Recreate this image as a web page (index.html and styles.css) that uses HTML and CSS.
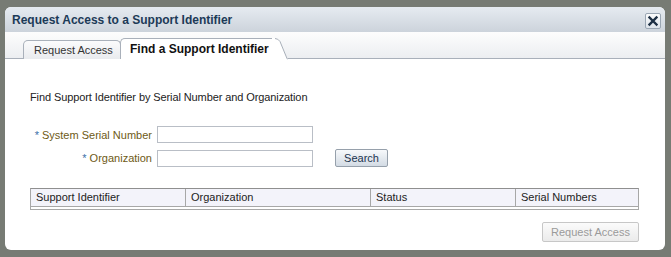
FILE: index.html
```html
<!DOCTYPE html>
<html>
<head>
<meta charset="utf-8">
<link rel="stylesheet" href="styles.css">
</head>
<body>
<div class="dialog">
  <div class="header">
    <span class="title">Request Access to a Support Identifier</span>
    <span class="close"><svg width="12" height="12" viewBox="0 0 12 12"><path d="M2.5 2.5 L9.5 9.5 M9.5 2.5 L2.5 9.5" stroke="#1d2f44" stroke-width="2.4" stroke-linecap="square"/></svg></span>
  </div>
  <div class="tabbar">
    <div class="tab">Request Access</div>
    <div class="tab active">Find a Support Identifier<svg class="slope" width="16" height="22" viewBox="0 0 16 22"><path d="M0 0 L3 0 Q6 0 8 3 L15 20 L16 21 L16 22 L0 22 Z" fill="#fff"/><path d="M3 0.5 Q6 0.5 8 3.5 L15 20.5 L16 21.5" fill="none" stroke="#a7aeb8"/></svg></div>
  </div>
  <div class="content">
    <p class="intro">Find Support Identifier by Serial Number and Organization</p>
    <div class="form">
      <label class="lbl"><span class="req">*</span> System Serial Number</label>
      <span class="input"></span>
      <span></span>
      <label class="lbl"><span class="req">*</span> Organization</label>
      <span class="input"></span>
      <button class="btn">Search</button>
    </div>
    <div class="table">
      <div class="thead">
        <div class="th c1">Support Identifier</div>
        <div class="th c2">Organization</div>
        <div class="th c3">Status</div>
        <div class="th c4">Serial Numbers</div>
      </div>
    </div>
    <div class="footer">
      <button class="btn disabled">Request Access</button>
    </div>
  </div>
</div>
</body>
</html>
```
FILE: styles.css
```css
html, body { margin: 0; padding: 0; }
body {
  background: #777b74;
  width: 671px;
  height: 257px;
  overflow: hidden;
  font-family: "Liberation Sans", Arial, sans-serif;
  font-size: 11px;
  color: #222;
}
.dialog {
  margin: 7px 6px 0 5px;
  height: 243px;
  background: #fff;
  border-radius: 6px;
  display: flex;
  flex-direction: column;
  overflow: hidden;
}
.header {
  height: 25px;
  background: linear-gradient(#e6ebf1, #ccd3db);
  display: flex;
  align-items: center;
  justify-content: space-between;
  padding: 0 4px 0 7px;
}
.title {
  font-weight: bold;
  font-size: 12px;
  color: #1c3a57;
}
.close {
  width: 14px;
  height: 14px;
  border: 1px solid #9aa6b3;
  border-radius: 2px;
  background: linear-gradient(#fafbfc, #dde3ea);
  display: flex;
  align-items: center;
  justify-content: center;
  margin-top: 2px;
}
.tabbar {
  height: 26px;
  background: linear-gradient(#fdfdfd, #eceef1);
  border-bottom: 1px solid #a9b0ba;
  display: flex;
  align-items: flex-end;
  padding-left: 18px;
}
.tab {
  height: 18px;
  width: 76px;
  padding: 0 10px;
  border: 1px solid #a9b0ba;
  border-bottom: none;
  border-radius: 5px 5px 0 0;
  background: linear-gradient(#fbfbfc, #e9ebee);
  color: #333;
  display: flex;
  align-items: center;
  margin-bottom: -1px;
  position: relative;
  white-space: nowrap;
}
.tab.active {
  width: auto;
  height: 20px;
  background: #fff;
  font-weight: bold;
  font-size: 12px;
  color: #111;
  border-right: none;
  border-radius: 5px 0 0 0;
  padding-left: 9px;
  padding-right: 3px;
  margin-left: -1px;
  margin-right: 16px;
}
.slope {
  position: absolute;
  right: -16px;
  top: -1px;
}
.content {
  flex: 1;
  padding: 0 26px 0 25px;
  display: flex;
  flex-direction: column;
}
.intro {
  margin: 32px 0 0 0;
  color: #222;
  letter-spacing: -0.1px;
}
.form {
  display: grid;
  grid-template-columns: 122px 156px 74px;
  column-gap: 5px;
  row-gap: 6px;
  align-items: center;
  margin-top: 23px;
}
.lbl {
  text-align: right;
  color: #6e5a16;
  white-space: nowrap;
}
.req { color: #3b6fa8; }
.input {
  height: 15px;
  border: 1px solid #b9bec6;
  background: #fff;
}
.btn {
  font-family: inherit;
  font-size: 11px;
  border: 1px solid #96a0ab;
  border-radius: 2px;
  background: linear-gradient(#f7f9fb, #d3dbe4);
  color: #1b3550;
  height: 18px;
  padding: 0;
  justify-self: start;
  margin-left: 17px;
  width: 53px;
  white-space: nowrap;
}
.table {
  margin-top: 21px;
  border: 1px solid #a7a7a7;
  border-top-color: #8f8f8f;
  height: 20px;
}
.thead {
  display: flex;
  height: 17px;
  border-bottom: 1px solid #a7a7a7;
  background: #f3f3fa;
}
.th {
  padding-left: 5px;
  line-height: 17px;
  border-right: 1px solid #a7a7a7;
  color: #222;
}
.c1 { width: 149px; }
.c2 { width: 179px; }
.c3 { width: 139px; }
.c4 { flex: 1; border-right: none; }
.footer {
  display: flex;
  justify-content: flex-end;
  margin-top: 12px;
}
.btn.disabled {
  margin-left: 0;
  width: 97px;
  height: 20px;
  color: #9a9a9a;
  background: linear-gradient(#fbfbfb, #ebebeb);
  border-color: #c7c7c7;
}
```
